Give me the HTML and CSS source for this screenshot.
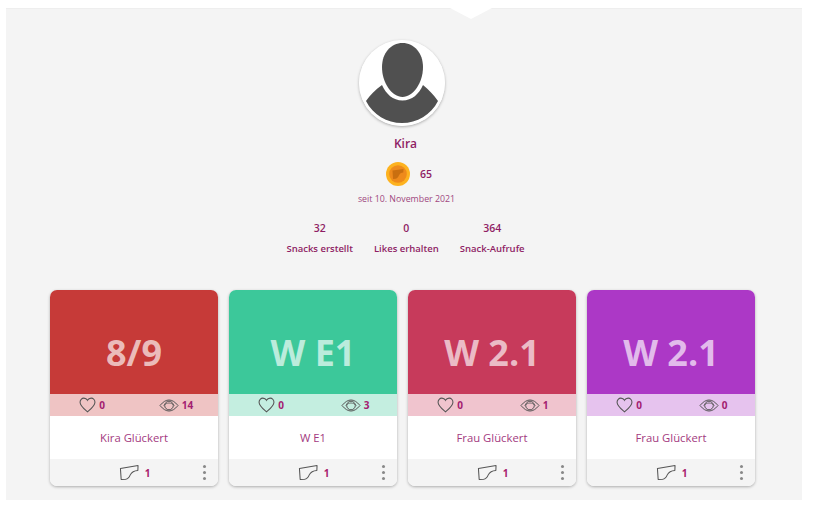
FILE: index.html
```html
<!DOCTYPE html>
<html lang="de">
<head>
  <meta charset="UTF-8" />
  <title>Profil</title>
  <link rel="stylesheet" href="styles.css">
</head>
<body>

  <svg class="icon-defs" width="0" height="0">
    <symbol id="heart" viewBox="0 0 16 15">
      <path d="M8 14C4 10.600 1 8.200 1 4.900 1 2.700 2.600 1 4.600 1 6 1 7.300 1.800 8 3.100 8.700 1.800 10 1 11.400 1 13.400 1 15 2.700 15 4.900 15 8.200 12 10.600 8 14Z" fill="none" stroke="#555" stroke-width="1"/>
    </symbol>
    <symbol id="eye" viewBox="0 0 20 13">
      <path d="M1 6.500C4 2.800 7 1 10 1s6 1.800 9 5.500C16 10.200 13 12 10 12S4 10.200 1 6.500Z" fill="none" stroke="#555" stroke-width="1"/>
      <circle cx="10" cy="6.500" r="4.300" fill="none" stroke="#555" stroke-width="1"/>
      <path d="M4.500 6.500C6.500 4.800 8.200 4 10 4s3.500.8 5.500 2.500" fill="none" stroke="#555" stroke-width=".8"/>
    </symbol>
    <symbol id="snack" viewBox="0 0 21 17">
      <path d="M1.500 4.300 20 1.200 19.800 6.300C15.500 6.500 13.300 8 11.800 11 10.800 13.500 9.300 15.300 7 15.600L2.300 15.800Z" fill="none" stroke="#555" stroke-width="1.100" stroke-linejoin="round"/>
    </symbol>
  </svg>

  <main class="profile-panel">
    <div class="notch"></div>

    <section class="profile">
      <div class="avatar">
        <svg viewBox="0 0 86 86" width="86" height="86">
          <circle cx="43" cy="43" r="43" fill="#fff"/>
          <path d="M23 45C16 50 11 55 7 61 14 75 28 83 43 83S72 75 79 61C75 55 70 50 64 45 60 54 53 60.500 43.500 60.500S27 54 23 45Z" fill="#505050"/>
          <path d="M43.500 3C55 3 64 13 64 27 64 43 54 57 43.500 57S23 43 23 27C23 13 32 3 43.500 3Z" fill="#505050"/>
        </svg>
      </div>
      <div class="name">Kira</div>
      <div class="score">
        <svg class="coin" viewBox="0 0 24 24" width="24" height="24">
          <circle cx="12" cy="12" r="12" fill="#fdb21f"/>
          <circle cx="12" cy="12" r="8.800" fill="#ee8a1c"/>
          <path d="M6.500 8.500 17.500 7 17.300 10.500C15 10.700 13.800 11.500 13 13.300 12.300 15.200 11.300 16.500 9.800 16.700L7 17Z" fill="#c96f10"/>
        </svg>
        <span>65</span>
      </div>
      <div class="since">seit 10. November 2021</div>
      <div class="stats">
        <div class="stat"><b>32</b><span>Snacks erstellt</span></div>
        <div class="stat"><b>0</b><span>Likes erhalten</span></div>
        <div class="stat"><b>364</b><span>Snack-Aufrufe</span></div>
      </div>
    </section>

    <section class="cards">
      <article class="card card-red">
        <div class="card-title">8/9</div>
        <div class="card-band">
          <span class="band-item"><svg class="heart"><use href="#heart"/></svg>0</span>
          <span class="band-item"><svg class="eye"><use href="#eye"/></svg>14</span>
        </div>
        <div class="card-author">Kira Glückert</div>
        <div class="card-foot">
          <span class="foot-count"><svg class="snack"><use href="#snack"/></svg>1</span>
          <span class="dots"><i></i><i></i><i></i></span>
        </div>
      </article>

      <article class="card card-green">
        <div class="card-title">W E1</div>
        <div class="card-band">
          <span class="band-item"><svg class="heart"><use href="#heart"/></svg>0</span>
          <span class="band-item"><svg class="eye"><use href="#eye"/></svg>3</span>
        </div>
        <div class="card-author">W E1</div>
        <div class="card-foot">
          <span class="foot-count"><svg class="snack"><use href="#snack"/></svg>1</span>
          <span class="dots"><i></i><i></i><i></i></span>
        </div>
      </article>

      <article class="card card-rose">
        <div class="card-title">W 2.1</div>
        <div class="card-band">
          <span class="band-item"><svg class="heart"><use href="#heart"/></svg>0</span>
          <span class="band-item"><svg class="eye"><use href="#eye"/></svg>1</span>
        </div>
        <div class="card-author">Frau Glückert</div>
        <div class="card-foot">
          <span class="foot-count"><svg class="snack"><use href="#snack"/></svg>1</span>
          <span class="dots"><i></i><i></i><i></i></span>
        </div>
      </article>

      <article class="card card-purple">
        <div class="card-title">W 2.1</div>
        <div class="card-band">
          <span class="band-item"><svg class="heart"><use href="#heart"/></svg>0</span>
          <span class="band-item"><svg class="eye"><use href="#eye"/></svg>0</span>
        </div>
        <div class="card-author">Frau Glückert</div>
        <div class="card-foot">
          <span class="foot-count"><svg class="snack"><use href="#snack"/></svg>1</span>
          <span class="dots"><i></i><i></i><i></i></span>
        </div>
      </article>
    </section>
  </main>

</body>
</html>
```

FILE: styles.css
```css
html, body {
  height: 100%;
}

body {
  margin: 0;
  background-color: #fff;
  font-family: "Open Sans", Arial, sans-serif;
  color: #8f1d64;
  overflow: hidden;
}

.icon-defs {
  position: absolute;
}

.profile-panel {
  position: relative;
  box-sizing: border-box;
  width: 796px;
  height: 492px;
  margin: 8px 0 0 6px;
  padding: 31px 0 0 44px;
  background-color: #f4f4f4;
  border-top: 1px solid #eee;
}

.notch {
  position: absolute;
  left: 444px;
  top: -1px;
  width: 0;
  height: 0;
  border-left: 21px solid transparent;
  border-right: 21px solid transparent;
  border-top: 11px solid #fff;
}

.profile {
  width: 703px;
  display: flex;
  flex-direction: column;
  align-items: center;
  font-weight: 600;
}

.avatar {
  width: 86px;
  height: 86px;
  border-radius: 50%;
  box-shadow: 0 1px 3px rgba(0, 0, 0, 0.3);
}

.avatar svg {
  display: block;
}

.name {
  margin-top: 11px;
  margin-left: 8px;
  font-size: 12px;
  line-height: 14px;
  font-weight: 600;
}

.score {
  display: flex;
  align-items: center;
  gap: 10px;
  margin-top: 11px;
  margin-left: 15px;
  font-size: 10.500px;
  font-weight: 600;
}

.coin {
  display: block;
}

.since {
  margin-top: 7px;
  margin-left: 10px;
  font-size: 8.800px;
  line-height: 12px;
  font-weight: 400;
  color: #a0487f;
}

.stats {
  display: flex;
  gap: 21px;
  margin-top: 17px;
  margin-left: 8px;
  font-size: 9.500px;
}

.stat {
  display: flex;
  flex-direction: column;
  align-items: center;
  gap: 9px;
  line-height: 12px;
}

.stat b {
  font-size: 10.500px;
  font-weight: 600;
}

.cards {
  display: flex;
  gap: 11px;
  margin-top: 35px;
}

.card {
  width: 168px;
  height: 196px;
  display: flex;
  flex-direction: column;
  border-radius: 7px;
  overflow: hidden;
  background-color: #fff;
  box-shadow: 0 1px 3px rgba(0, 0, 0, 0.3);
}

.card-title {
  height: 104px;
  box-sizing: border-box;
  padding-top: 41px;
  text-align: center;
  font-size: 36px;
  line-height: 44px;
  font-weight: 700;
  color: rgba(255, 255, 255, 0.66);
}

.card-band {
  height: 22px;
  display: flex;
  align-items: center;
  font-size: 10px;
  font-weight: 700;
  color: #a32070;
}

.band-item {
  flex: 1;
  display: flex;
  align-items: center;
  justify-content: center;
  gap: 3px;
}

.heart {
  width: 17px;
  height: 16px;
}

.eye {
  width: 20px;
  height: 13px;
}

.card-author {
  height: 43px;
  box-sizing: border-box;
  padding-bottom: 1px;
  display: flex;
  align-items: center;
  justify-content: center;
  font-size: 11.300px;
  color: #a33a80;
}

.card-foot {
  flex: 1;
  display: grid;
  grid-template-columns: 1fr auto 1fr;
  align-items: center;
  padding: 0 12px 0 13px;
  background-color: #f4f4f4;
}

.foot-count {
  grid-column: 2;
  display: flex;
  align-items: center;
  gap: 6px;
  font-size: 10px;
  font-weight: 700;
  color: #a81c6c;
}

.snack {
  width: 20px;
  height: 17px;
}

.dots {
  grid-column: 3;
  justify-self: end;
  display: flex;
  flex-direction: column;
  gap: 2.500px;
}

.dots i {
  display: block;
  width: 3.500px;
  height: 3.500px;
  border-radius: 50%;
  background-color: #888;
}

.card-red .card-title { background-color: #c63a38; }
.card-red .card-band { background-color: #efc4c4; }
.card-green .card-title { background-color: #3cc89a; }
.card-green .card-band { background-color: #c4eee0; }
.card-rose .card-title { background-color: #c73a5b; }
.card-rose .card-band { background-color: #f0c4ce; }
.card-purple .card-title { background-color: #ac38c6; }
.card-purple .card-band { background-color: #e6c3ee; }
```
